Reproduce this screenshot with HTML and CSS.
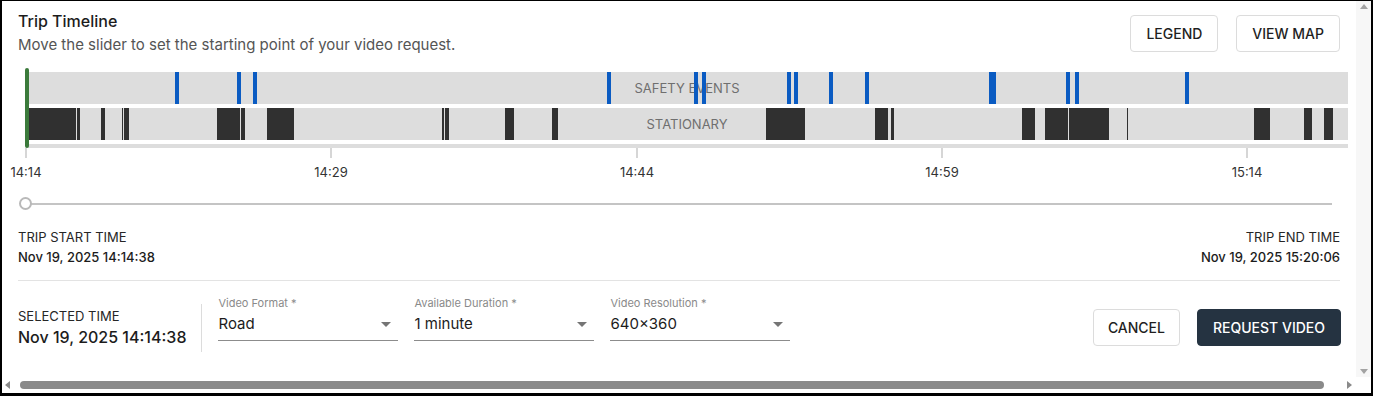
FILE: index.html
```html
<!DOCTYPE html>
<html lang="en">
<head>
    <meta charset="UTF-8">
    <meta name="viewport" content="width=device-width, initial-scale=1.0">
    <title>Trip Timeline</title>
    <link rel="stylesheet" href="styles.css">
</head>
<body>
    <div class="window">
        <div class="viewport">
            <div class="page">

                <!-- header -->
                <div class="header">
                    <div>
                        <h2 class="title">Trip Timeline</h2>
                        <p class="subtitle">Move the slider to set the starting point of your video request.</p>
                    </div>
                    <div class="header-actions">
                        <button class="btn btn-outline">LEGEND</button>
                        <button class="btn btn-outline">VIEW MAP</button>
                    </div>
                </div>

                <!-- timeline tracks -->
                <div class="timeline">
                    <div class="now-marker"></div>

                    <div class="track">
                        <span class="track-name">SAFETY EVENTS</span>
                        <i class="event" style="left:149px"></i>
                        <i class="event" style="left:211px"></i>
                        <i class="event" style="left:227px"></i>
                        <i class="event" style="left:581px"></i>
                        <i class="event" style="left:668px"></i>
                        <i class="event" style="left:676px"></i>
                        <i class="event" style="left:761px"></i>
                        <i class="event" style="left:768px"></i>
                        <i class="event" style="left:803px"></i>
                        <i class="event" style="left:839px"></i>
                        <i class="event" style="left:963px;width:7px"></i>
                        <i class="event" style="left:1040px"></i>
                        <i class="event" style="left:1049px"></i>
                        <i class="event" style="left:1159px"></i>
                    </div>

                    <div class="track">
                        <span class="track-name">STATIONARY</span>
                        <i class="stop" style="left:0;width:50px"></i>
                        <i class="stop" style="left:51px;width:3px"></i>
                        <i class="stop" style="left:75px;width:4px"></i>
                        <i class="stop" style="left:96px;width:1px"></i>
                        <i class="stop" style="left:98px;width:5px"></i>
                        <i class="stop" style="left:191px;width:23px"></i>
                        <i class="stop" style="left:215px;width:4px"></i>
                        <i class="stop" style="left:241px;width:27px"></i>
                        <i class="stop" style="left:416px;width:2px"></i>
                        <i class="stop" style="left:419px;width:4px"></i>
                        <i class="stop" style="left:479px;width:9px"></i>
                        <i class="stop" style="left:526px;width:6px"></i>
                        <i class="stop" style="left:740px;width:39px"></i>
                        <i class="stop" style="left:849px;width:13px"></i>
                        <i class="stop" style="left:865px;width:3px"></i>
                        <i class="stop" style="left:996px;width:13px"></i>
                        <i class="stop" style="left:1019px;width:23px"></i>
                        <i class="stop" style="left:1043px;width:40px"></i>
                        <i class="stop" style="left:1101px;width:1px"></i>
                        <i class="stop" style="left:1228px;width:16px"></i>
                        <i class="stop" style="left:1278px;width:8px"></i>
                        <i class="stop" style="left:1298px;width:9px"></i>
                    </div>

                    <div class="axis-line"></div>
                    <div class="axis">
                        <div class="tick" style="left:-1px"><span>14:14</span></div>
                        <div class="tick" style="left:304px"><span>14:29</span></div>
                        <div class="tick" style="left:610px"><span>14:44</span></div>
                        <div class="tick" style="left:915px"><span>14:59</span></div>
                        <div class="tick" style="left:1220px"><span>15:14</span></div>
                    </div>
                </div>

                <!-- slider -->
                <div class="slider">
                    <div class="slider-rail"></div>
                    <div class="slider-thumb"></div>
                </div>

                <!-- trip start / end -->
                <div class="trip-times">
                    <div>
                        <div class="caption">TRIP START TIME</div>
                        <div class="stamp">Nov 19, 2025 14:14:38</div>
                    </div>
                    <div class="align-right">
                        <div class="caption">TRIP END TIME</div>
                        <div class="stamp">Nov 19, 2025 15:20:06</div>
                    </div>
                </div>

                <div class="divider"></div>

                <!-- request form -->
                <div class="request-row">
                    <div class="selected">
                        <div class="caption">SELECTED TIME</div>
                        <div class="selected-value">Nov 19, 2025 14:14:38</div>
                    </div>
                    <div class="vline"></div>

                    <div class="fields">
                        <div class="field">
                            <div class="field-label">Video Format *</div>
                            <div class="field-control">
                                <span>Road</span>
                                <svg class="caret" viewBox="0 0 24 24" width="24" height="24"><path d="M7 10l5 5 5-5z"/></svg>
                            </div>
                        </div>
                        <div class="field">
                            <div class="field-label">Available Duration *</div>
                            <div class="field-control">
                                <span>1 minute</span>
                                <svg class="caret" viewBox="0 0 24 24" width="24" height="24"><path d="M7 10l5 5 5-5z"/></svg>
                            </div>
                        </div>
                        <div class="field">
                            <div class="field-label">Video Resolution *</div>
                            <div class="field-control">
                                <span>640×360</span>
                                <svg class="caret" viewBox="0 0 24 24" width="24" height="24"><path d="M7 10l5 5 5-5z"/></svg>
                            </div>
                        </div>
                    </div>

                    <div class="form-actions">
                        <button class="btn btn-outline">CANCEL</button>
                        <button class="btn btn-dark">REQUEST VIDEO</button>
                    </div>
                </div>

            </div>
        </div>

        <!-- scrollbars -->
        <div class="vscroll">
            <span class="arrow arrow-up"></span>
            <span class="arrow arrow-down"></span>
        </div>
        <div class="hscroll">
            <span class="arrow arrow-left"></span>
            <div class="hthumb"></div>
            <span class="arrow arrow-right"></span>
        </div>
        <div class="corner"></div>
    </div>
</body>
</html>
```

FILE: styles.css
```css
* {
    margin: 0;
    padding: 0;
    box-sizing: border-box;
}

body {
    font-family: "Inter", "Liberation Sans", sans-serif;
    color: #1c1c1c;
    background: #fff;
}

/* outer frame with scrollbars */
.window {
    width: 1373px;
    height: 396px;
    border: 2px solid #000;
    border-top-width: 1px;
    border-bottom-width: 3px;
    display: grid;
    grid-template-columns: 1fr 15px;
    grid-template-rows: 1fr 16px;
    overflow: hidden;
}

.viewport {
    overflow: hidden;
}

.page {
    padding: 9px 16px 0 16px;
}

/* header */
.header {
    display: flex;
    justify-content: space-between;
    align-items: flex-start;
}

.title {
    font-size: 16px;
    line-height: 22px;
    font-weight: 500;
    color: #1c1c1c;
}

.subtitle {
    margin-top: 3px;
    font-size: 15px;
    line-height: 20px;
    color: #555;
}

.header-actions {
    display: flex;
    gap: 18px;
    margin-top: 5px;
}

.btn {
    font-family: inherit;
    font-size: 14px;
    font-weight: 500;
    height: 37px;
    padding: 0 15px;
    border-radius: 4px;
    cursor: pointer;
}

.btn-outline {
    background: #fff;
    color: #1f1f1f;
    border: 1px solid #dcdcdc;
}

.btn-dark {
    background: #253341;
    color: #fff;
    border: 1px solid #253341;
    padding: 0 15px;
}

/* timeline */
.timeline {
    position: relative;
    padding-top: 4px;
    margin: 13px -8px 0 8px;
}

.now-marker {
    position: absolute;
    left: -1px;
    top: 0;
    width: 4px;
    height: 80px;
    background: #3b7a3b;
    border-radius: 2px;
    z-index: 2;
}

.track {
    position: relative;
    height: 32px;
    background: #dddddd;
    margin-bottom: 4px;
    display: flex;
    align-items: center;
    justify-content: center;
}

.track-name {
    font-size: 13px;
    color: #6f6f6f;
}

.event {
    position: absolute;
    top: 0;
    bottom: 0;
    width: 4px;
    background: #0a5bc2;
}

.stop {
    position: absolute;
    top: 0;
    bottom: 0;
    background: #303030;
}

.axis-line {
    height: 4px;
    background: #dddddd;
}

.axis {
    position: relative;
    height: 32px;
}

.tick {
    position: absolute;
    top: 0;
    width: 2px;
    height: 10px;
    background: #d6d6d6;
}

.tick span {
    position: absolute;
    top: 16px;
    left: 1px;
    transform: translateX(-50%);
    font-size: 13px;
    line-height: 16px;
    color: #333;
    white-space: nowrap;
}

/* slider */
.slider {
    position: relative;
    height: 14px;
    margin: 17px 8px 0 1px;
}

.slider-rail {
    position: absolute;
    left: 6px;
    right: 0;
    top: 6px;
    height: 2px;
    background: #c4c4c4;
}

.slider-thumb {
    position: absolute;
    left: 0;
    top: 0;
    width: 13px;
    height: 13px;
    border: 2px solid #b9b9b9;
    border-radius: 50%;
    background: #fff;
}

/* trip start and end */
.trip-times {
    display: flex;
    justify-content: space-between;
    margin-top: 16px;
}

.align-right {
    text-align: right;
}

.caption {
    font-size: 13px;
    line-height: 20px;
    color: #262626;
}

.stamp {
    font-size: 13px;
    line-height: 20px;
    font-weight: 500;
    color: #1c1c1c;
}

.divider {
    height: 1px;
    background: #e3e3e3;
    margin-top: 13px;
}

/* request form row */
.request-row {
    display: flex;
    align-items: flex-start;
    margin-top: 15px;
}

.selected {
    margin-top: 10px;
}

.selected-value {
    font-size: 16px;
    line-height: 22px;
    font-weight: 500;
    color: #1c1c1c;
}

.vline {
    width: 1px;
    height: 48px;
    background: #dcdcdc;
    margin: 8px 16px 0 15px;
}

.fields {
    display: flex;
    gap: 16px;
}

.field {
    width: 180px;
}

.field-label {
    font-size: 11px;
    line-height: 14px;
    color: #8a8a8a;
}

.field-control {
    display: flex;
    align-items: center;
    justify-content: space-between;
    margin-top: 3px;
    padding-bottom: 5px;
    border-bottom: 1px solid #8c8c8c;
    font-size: 15px;
    line-height: 22px;
    color: #1c1c1c;
}

.caret {
    margin: -1px 0;
    fill: #757575;
}

.form-actions {
    display: flex;
    gap: 17px;
    margin-left: auto;
    margin-top: 13px;
    margin-right: -1px;
}

.form-actions .btn-outline {
    padding: 0 14px;
}

/* scrollbars */
.vscroll {
    background: #f7f7f7;
    display: flex;
    flex-direction: column;
    justify-content: space-between;
    align-items: center;
    padding: 3px 0 3px 0;
}

.hscroll {
    display: flex;
    align-items: center;
    background: #fff;
}

.corner {
    background: #fff;
}

.arrow {
    width: 0;
    height: 0;
    border: 4px solid transparent;
}

.arrow-up {
    border-bottom: 5px solid #a3a3a3;
    border-top: 0;
}

.arrow-down {
    border-top: 5px solid #a3a3a3;
    border-bottom: 0;
}

.arrow-left {
    border-right: 5px solid #8a8a8a;
    border-left: 0;
    margin-left: 3px;
}

.arrow-right {
    border-left: 5px solid #8a8a8a;
    border-right: 0;
    margin-right: 4px;
}

.hthumb {
    flex: 1;
    height: 8px;
    border-radius: 4px;
    background: #8a8a8a;
    margin: 0 23px 0 10px;
}
```
